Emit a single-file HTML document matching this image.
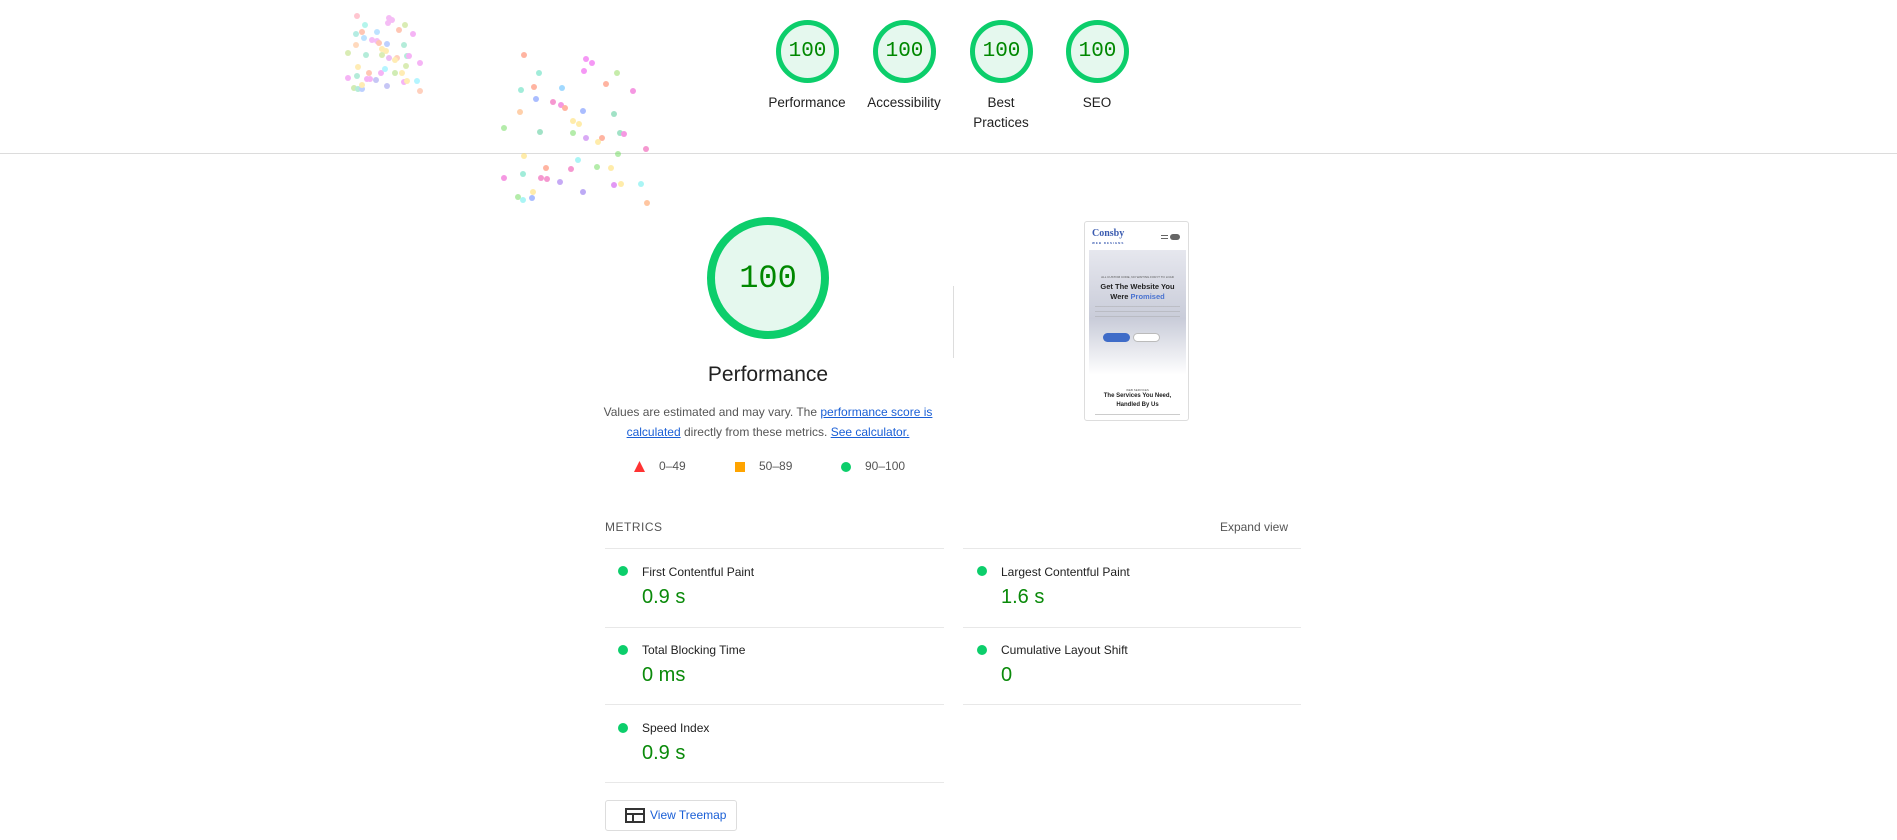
<!DOCTYPE html>
<html><head><meta charset="utf-8"><style>
*{margin:0;padding:0;box-sizing:border-box}
body{width:1897px;height:840px;background:#fff;font-family:"Liberation Sans",sans-serif;position:relative;overflow:hidden;color:#212121}
.a{position:absolute}
.g{position:absolute;border-radius:50%;border:5px solid #0cce6b;background:#e5f8ee;display:flex;align-items:center;justify-content:center;font-family:"Liberation Mono",monospace;color:#008800}
.lbl{position:absolute;width:110px;text-align:center;font-size:13.5px;line-height:20px;color:#212121}
.line{position:absolute;height:1px;background:#e8e8e8}
.ml{position:absolute;font-size:12px;color:#212121}
.mv{position:absolute;font-size:20px;color:#0a8a0a}
.md{position:absolute;width:10px;height:10px;border-radius:50%;background:#0cce6b}
a{color:#1a5fd6;text-decoration:underline}
</style></head><body>

<div class="g" style="left:776px;top:20px;width:63px;height:63px;font-size:21px">100</div>
<div class="g" style="left:873px;top:20px;width:63px;height:63px;font-size:21px">100</div>
<div class="g" style="left:970px;top:20px;width:63px;height:63px;font-size:21px">100</div>
<div class="g" style="left:1066px;top:20px;width:63px;height:63px;font-size:21px">100</div>
<div class="lbl" style="left:752px;top:93px">Performance</div>
<div class="lbl" style="left:849px;top:93px">Accessibility</div>
<div class="lbl" style="left:946px;top:93px">Best<br>Practices</div>
<div class="lbl" style="left:1042px;top:93px">SEO</div>
<div class="line" style="left:0;top:153px;width:1897px;background:#dcdcdc"></div>

<div class="g" style="left:707px;top:217px;width:122px;height:122px;border-width:8px;font-size:32px">100</div>
<div class="a" style="left:618px;top:363px;width:300px;text-align:center;font-size:21px;color:#212121">Performance</div>
<div class="a" style="left:588px;top:402px;width:360px;text-align:center;font-size:12px;line-height:20px;color:#555">Values are estimated and may vary. The <a>performance score is calculated</a> directly from these metrics. <a>See calculator.</a></div>
<svg class="a" style="left:634px;top:461px" width="11" height="11"><polygon points="5.5,0 11,11 0,11" fill="#f33"/></svg>
<div class="a" style="left:659px;top:459px;font-size:12px;color:#555">0–49</div>
<div class="a" style="left:735px;top:462px;width:10px;height:10px;background:#ffa400"></div>
<div class="a" style="left:759px;top:459px;font-size:12px;color:#555">50–89</div>
<div class="a" style="left:841px;top:462px;width:10px;height:10px;border-radius:50%;background:#0cce6b"></div>
<div class="a" style="left:865px;top:459px;font-size:12px;color:#555">90–100</div>
<div class="a" style="left:953px;top:286px;width:1px;height:72px;background:#ddd"></div>

<div class="a" style="left:1084px;top:221px;width:105px;height:200px;border:1px solid #ddd;border-radius:3px;overflow:hidden;background:#fff">
 <div class="a" style="left:7px;top:6px;font-size:10px;font-weight:bold;color:#3a5bb0;font-family:'Liberation Serif',serif">Consby</div>
 <div class="a" style="left:7px;top:19px;font-size:3px;color:#3a5bb0;font-weight:bold;letter-spacing:1px">WEB DESIGNS</div>
 <div class="a" style="left:76px;top:13px;width:7px;height:4px;border-top:1px solid #666;border-bottom:1px solid #666"></div>
 <div class="a" style="left:85px;top:12px;width:10px;height:6px;border-radius:3px;background:#666"></div>
 <div class="a" style="left:4px;top:28px;width:97px;height:125px;background:linear-gradient(#e6e7ee,#c9ccd9 55%,#fff)"></div>
 <div class="a" style="left:0;top:53px;width:105px;text-align:center;font-size:3px;color:#555">ALL CUSTOM CODE, NO WAITING FOR IT TO LOAD</div>
 <div class="a" style="left:0;top:60px;width:105px;text-align:center;font-size:7.5px;font-weight:bold;line-height:10px;color:#222">Get The Website You<br>Were <span style="color:#4a73d0">Promised</span></div>
 <div class="a" style="left:10px;top:84px;width:85px;height:14px;background:repeating-linear-gradient(#999 0 1px,transparent 1px 5px);opacity:.35"></div>
 <div class="a" style="left:18px;top:111px;width:27px;height:9px;border-radius:5px;background:#3f6cc8"></div>
 <div class="a" style="left:48px;top:111px;width:27px;height:9px;border-radius:5px;border:1px solid #bbb;background:#fff"></div>
 <div class="a" style="left:0;top:166px;width:105px;text-align:center;font-size:3px;color:#555">WEB SERVICES</div>
 <div class="a" style="left:0;top:170px;width:105px;text-align:center;font-size:6px;font-weight:bold;line-height:9px;color:#222">The Services You Need,<br>Handled By Us</div>
 <div class="a" style="left:10px;top:192px;width:85px;height:1px;background:#ccc"></div>
</div>

<div class="a" style="left:605px;top:520px;font-size:12px;letter-spacing:.5px;color:#555">METRICS</div>
<div class="a" style="left:1190px;top:520px;width:98px;text-align:right;font-size:12px;color:#555">Expand view</div>
<div class="line" style="left:605px;top:548px;width:339px"></div>
<div class="line" style="left:963px;top:548px;width:338px"></div>
<div class="line" style="left:605px;top:627px;width:339px"></div>
<div class="line" style="left:963px;top:627px;width:338px"></div>
<div class="line" style="left:605px;top:704px;width:339px"></div>
<div class="line" style="left:963px;top:704px;width:338px"></div>
<div class="line" style="left:605px;top:782px;width:339px"></div>

<div class="md" style="left:618px;top:566px"></div><div class="ml" style="left:642px;top:565px">First Contentful Paint</div><div class="mv" style="left:642px;top:586px">0.9 s</div>
<div class="md" style="left:977px;top:566px"></div><div class="ml" style="left:1001px;top:565px">Largest Contentful Paint</div><div class="mv" style="left:1001px;top:586px">1.6 s</div>
<div class="md" style="left:618px;top:645px"></div><div class="ml" style="left:642px;top:643px">Total Blocking Time</div><div class="mv" style="left:642px;top:664px">0 ms</div>
<div class="md" style="left:977px;top:645px"></div><div class="ml" style="left:1001px;top:643px">Cumulative Layout Shift</div><div class="mv" style="left:1001px;top:664px">0</div>
<div class="md" style="left:618px;top:723px"></div><div class="ml" style="left:642px;top:721px">Speed Index</div><div class="mv" style="left:642px;top:742px">0.9 s</div>

<div class="a" style="left:605px;top:800px;width:132px;height:31px;border:1px solid #ddd;border-radius:3px"></div>
<svg class="a" style="left:625px;top:808px" width="20" height="15" viewBox="0 0 20 15"><rect x="1" y="1" width="18" height="13" fill="none" stroke="#333" stroke-width="2"/><line x1="1" y1="6" x2="19" y2="6" stroke="#333" stroke-width="2"/><line x1="8" y1="6" x2="8" y2="14" stroke="#333" stroke-width="2"/></svg>
<div class="a" style="left:650px;top:808px;font-size:12px;color:#1a5fd6">View Treemap</div>

<svg class="a" style="left:0;top:0" width="700" height="220">
<g opacity=".55">
<circle cx="357" cy="16" r="3" fill="#f9a"/><circle cx="389" cy="18" r="3" fill="#e8e"/><circle cx="392" cy="20" r="3" fill="#e8e"/><circle cx="365" cy="25" r="3" fill="#7ed"/><circle cx="405" cy="25" r="3" fill="#bd7"/><circle cx="388" cy="23" r="3" fill="#e8e"/><circle cx="362" cy="32" r="3" fill="#f97"/><circle cx="356" cy="34" r="3" fill="#7dc"/><circle cx="377" cy="32" r="3" fill="#8cf"/><circle cx="399" cy="30" r="3" fill="#f97"/><circle cx="413" cy="34" r="3" fill="#e7e"/><circle cx="364" cy="38" r="3" fill="#8cf"/><circle cx="372" cy="40" r="3" fill="#e8e"/><circle cx="377" cy="41" r="3" fill="#e8e"/><circle cx="379" cy="43" r="3" fill="#f97"/><circle cx="387" cy="44" r="3" fill="#8af"/><circle cx="356" cy="45" r="3" fill="#fb8"/><circle cx="404" cy="45" r="3" fill="#7db"/><circle cx="348" cy="53" r="3" fill="#bd7"/><circle cx="366" cy="55" r="3" fill="#7db"/><circle cx="382" cy="49" r="3" fill="#fd7"/><circle cx="386" cy="51" r="3" fill="#fd7"/><circle cx="382" cy="55" r="3" fill="#bd7"/><circle cx="389" cy="58" r="3" fill="#d8e"/><circle cx="397" cy="58" r="3" fill="#fa8"/><circle cx="395" cy="60" r="3" fill="#fd7"/><circle cx="407" cy="56" r="3" fill="#7db"/><circle cx="409" cy="56" r="3" fill="#e7e"/><circle cx="420" cy="63" r="3" fill="#e7e"/><circle cx="358" cy="67" r="3" fill="#fd7"/><circle cx="406" cy="66" r="3" fill="#bd7"/><circle cx="369" cy="73" r="3" fill="#f97"/><circle cx="381" cy="73" r="3" fill="#e7e"/><circle cx="385" cy="69" r="3" fill="#7ef"/><circle cx="395" cy="73" r="3" fill="#ad7"/><circle cx="402" cy="73" r="3" fill="#fd7"/><circle cx="348" cy="78" r="3" fill="#e7e"/><circle cx="357" cy="76" r="3" fill="#7db"/><circle cx="367" cy="79" r="3" fill="#e7e"/><circle cx="370" cy="79" r="3" fill="#e7e"/><circle cx="376" cy="80" r="3" fill="#99e"/><circle cx="404" cy="82" r="3" fill="#e7e"/><circle cx="407" cy="81" r="3" fill="#fd7"/><circle cx="417" cy="81" r="3" fill="#7ef"/><circle cx="387" cy="86" r="3" fill="#99e"/><circle cx="354" cy="88" r="3" fill="#ad7"/><circle cx="358" cy="89" r="3" fill="#7db"/><circle cx="362" cy="89" r="3" fill="#8af"/><circle cx="362" cy="85" r="3" fill="#fd7"/><circle cx="420" cy="91" r="3" fill="#fa8"/>
<circle cx="524" cy="55" r="3" fill="#f75"/><circle cx="586" cy="59" r="3" fill="#e4e"/><circle cx="592" cy="63" r="3" fill="#e4e"/><circle cx="584" cy="71" r="3" fill="#e4e"/><circle cx="539" cy="73" r="3" fill="#5db"/><circle cx="617" cy="73" r="3" fill="#9d6"/><circle cx="606" cy="84" r="3" fill="#f75"/><circle cx="633" cy="91" r="3" fill="#e4c"/><circle cx="521" cy="90" r="3" fill="#5db"/><circle cx="534" cy="87" r="3" fill="#f75"/><circle cx="562" cy="88" r="3" fill="#5bf"/><circle cx="536" cy="99" r="3" fill="#68f"/><circle cx="553" cy="102" r="3" fill="#e4a"/><circle cx="561" cy="105" r="3" fill="#e4c"/><circle cx="565" cy="108" r="3" fill="#f75"/><circle cx="583" cy="111" r="3" fill="#68f"/><circle cx="614" cy="114" r="3" fill="#5c9"/><circle cx="520" cy="112" r="3" fill="#fa6"/><circle cx="573" cy="121" r="3" fill="#fd6"/><circle cx="579" cy="124" r="3" fill="#fd6"/><circle cx="504" cy="128" r="3" fill="#7d6"/><circle cx="540" cy="132" r="3" fill="#5c9"/><circle cx="573" cy="133" r="3" fill="#7d6"/><circle cx="586" cy="138" r="3" fill="#b6e"/><circle cx="602" cy="138" r="3" fill="#f75"/><circle cx="598" cy="142" r="3" fill="#fd6"/><circle cx="620" cy="133" r="3" fill="#5c9"/><circle cx="624" cy="134" r="3" fill="#e4c"/><circle cx="646" cy="149" r="3" fill="#e4a"/><circle cx="618" cy="154" r="3" fill="#7d6"/><circle cx="524" cy="156" r="3" fill="#fd6"/><circle cx="578" cy="160" r="3" fill="#6ee"/><circle cx="546" cy="168" r="3" fill="#f75"/><circle cx="571" cy="169" r="3" fill="#e4a"/><circle cx="597" cy="167" r="3" fill="#7d6"/><circle cx="611" cy="168" r="3" fill="#fd6"/><circle cx="504" cy="178" r="3" fill="#e4c"/><circle cx="523" cy="174" r="3" fill="#5db"/><circle cx="541" cy="178" r="3" fill="#e4a"/><circle cx="547" cy="179" r="3" fill="#e4a"/><circle cx="560" cy="182" r="3" fill="#96e"/><circle cx="614" cy="185" r="3" fill="#c4e"/><circle cx="621" cy="184" r="3" fill="#fd6"/><circle cx="641" cy="184" r="3" fill="#6ee"/><circle cx="533" cy="192" r="3" fill="#fd6"/><circle cx="583" cy="192" r="3" fill="#86e"/><circle cx="518" cy="197" r="3" fill="#7d6"/><circle cx="523" cy="200" r="3" fill="#6ee"/><circle cx="532" cy="198" r="3" fill="#68f"/><circle cx="647" cy="203" r="3" fill="#f95"/>
</g></svg>
</body></html>
